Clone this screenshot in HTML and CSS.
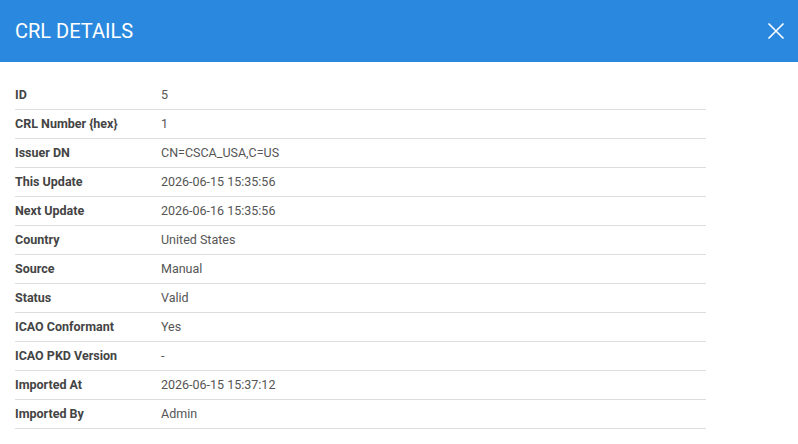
FILE: index.html
```html
<!DOCTYPE html>
<html lang="en">
<head>
    <meta charset="UTF-8">
    <meta name="viewport" content="width=device-width, initial-scale=1.0">
    <title>CRL Details</title>
    <link rel="stylesheet" href="styles.css">
</head>
<body>
    <div class="dialog">
        <div class="dialog-header">
            <h2 class="dialog-title">CRL DETAILS</h2>
            <button class="btn-close" type="button" aria-label="Close">
                <svg width="18" height="18" viewBox="0 0 18 18">
                    <path d="M1.5 1.5 L16.5 16.5 M16.5 1.5 L1.5 16.5" stroke="#fff" stroke-width="1.6" fill="none"/>
                </svg>
            </button>
        </div>
        <div class="dialog-body">
            <!-- crl 상세 정보 -->
            <table class="detail-table">
                <tr><th>ID</th><td>5</td></tr>
                <tr><th>CRL Number {hex}</th><td>1</td></tr>
                <tr><th>Issuer DN</th><td>CN=CSCA_USA,C=US</td></tr>
                <tr><th>This Update</th><td>2026-06-15 15:35:56</td></tr>
                <tr><th>Next Update</th><td>2026-06-16 15:35:56</td></tr>
                <tr><th>Country</th><td>United States</td></tr>
                <tr><th>Source</th><td>Manual</td></tr>
                <tr><th>Status</th><td>Valid</td></tr>
                <tr><th>ICAO Conformant</th><td>Yes</td></tr>
                <tr><th>ICAO PKD Version</th><td>-</td></tr>
                <tr><th>Imported At</th><td>2026-06-15 15:37:12</td></tr>
                <tr><th>Imported By</th><td>Admin</td></tr>
            </table>
        </div>
    </div>
</body>
</html>
```

FILE: styles.css
```css
body{
    margin: 0;
    font-family: Roboto, "Liberation Sans", sans-serif;
    background-color: #fff;
}
.dialog{
    width: 798px;
}
.dialog-header{
    height: 62px;
    background-color: #2a89de;
    display: flex;
    align-items: center;
    justify-content: space-between;
    padding: 0 13px 0 15px;
}
.dialog-title{
    margin: 0;
    font-size: 20px;
    font-weight: 400;
    color: #fff;
}
.btn-close{
    border: none;
    background: none;
    padding: 0;
    width: 18px;
    height: 18px;
    cursor: pointer;
}
.dialog-body{
    padding: 19px 15px 0 15px;
}
.detail-table{
    width: 691px;
    border-collapse: collapse;
}
.detail-table th,
.detail-table td{
    height: 26px;
    padding: 0 0 2px 0;
    border-bottom: 1px solid #dddddd;
    font-size: 12.5px;
    text-align: left;
    vertical-align: middle;
}
.detail-table th{
    width: 146px;
    font-weight: 700;
    color: #444;
}
.detail-table td{
    color: #555;
}
```
